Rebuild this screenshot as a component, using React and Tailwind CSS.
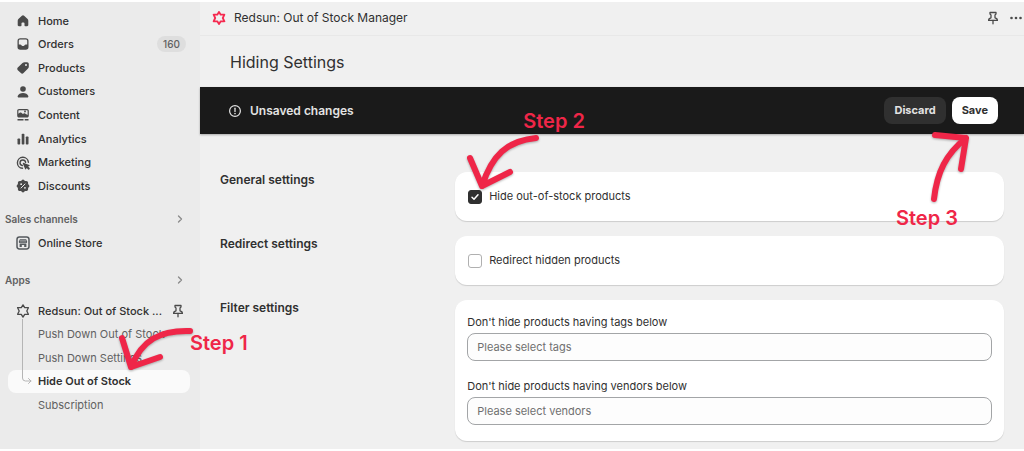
import { useState } from "react"

const Icon = ({ children, className = "text-[#4a4a4a]" }) => (
  <svg viewBox="0 0 14 14" className={`h-3.5 w-3.5 shrink-0 ${className}`} fill="currentColor" aria-hidden="true">
    {children}
  </svg>
)

const HomeIcon = () => (
  <Icon>
    <path d="M7 1.2c.4 0 .8.2 1.1.5l3.5 3.4c.4.4.7 1 .7 1.6v4.4c0 .7-.5 1.2-1.2 1.2H9.2c-.4 0-.7-.3-.7-.7V9.3c0-.5-.4-.9-.9-.9H6.4c-.5 0-.9.4-.9.9v2.3c0 .4-.3.7-.7.7H2.9c-.7 0-1.2-.5-1.2-1.2V6.7c0-.6.3-1.2.7-1.6l3.5-3.4c.3-.3.7-.5 1.1-.5z" />
  </Icon>
)

const OrdersIcon = () => (
  <Icon>
    <path
      fillRule="evenodd"
      d="M4.2 1.2h5.6a2.7 2.7 0 0 1 2.7 2.7v6.2a2.7 2.7 0 0 1-2.7 2.7H4.2a2.7 2.7 0 0 1-2.7-2.7V3.900a2.700 2.700 0 0 1 2.700-2.700zM4.200 2.500c-.8 0-1.400.6-1.400 1.400v3.500h1.500c.4 0 .8.200 1 .6l.3.500c.2.300.5.500.8.500h1.200c.3 0 .6-.2.8-.5l.3-.5c.2-.4.6-.6 1-.6h1.500V3.900c0-.8-.6-1.400-1.400-1.400z"
    />
  </Icon>
)

const ProductsIcon = () => (
  <Icon>
    <path
      fillRule="evenodd"
      d="M8.600 1.300h2.500c1 0 1.700.8 1.700 1.700v2.700c0 .7-.3 1.400-.8 1.900l-4.500 4.500c-.7.7-1.900.7-2.600 0L1.800 9.200c-.7-.7-.7-1.900 0-2.600l4.700-4.500c.6-.5 1.300-.8 2.100-.8zM10 5.100a1 1 0 1 0 0-2 1 1 0 0 0 0 2z"
    />
  </Icon>
)

const CustomersIcon = () => (
  <Icon>
    <circle cx="7" cy="4" r="2.800" />
    <path d="M7 8c2.600 0 4.500 1.200 5.300 3 .3.800-.2 1.500-1 1.500H2.700c-.8 0-1.300-.7-1-1.500C2.500 9.200 4.400 8 7 8z" />
  </Icon>
)

const ContentIcon = () => (
  <Icon>
    <path
      fillRule="evenodd"
      d="M3 1h8c1 0 1.800.8 1.800 1.800v5c0 1-.8 1.800-1.800 1.800H3c-1 0-1.800-.8-1.800-1.800v-5C1.200 1.800 2 1 3 1zm0 1.200c-.4 0-.6.3-.6.600v2.900l1.300-1c.5-.4 1.200-.4 1.700 0l1.500 1.300.8-.5c.4-.3 1-.3 1.400 0l2.500 1.600V2.800c0-.3-.2-.6-.6-.6zm6 2.200a.9.900 0 1 0 0-1.800.9.900 0 0 0 0 1.800z"
    />
    <path d="M1.500 11h6v1.400h-6zM8.700 11h3.800v1.400H8.700z" />
  </Icon>
)

const AnalyticsIcon = () => (
  <Icon>
    <rect x="1.500" y="6.500" width="2.700" height="6" rx=".8" />
    <rect x="5.700" y="1.800" width="2.700" height="10.700" rx=".8" />
    <rect x="9.800" y="4.500" width="2.700" height="8" rx=".8" />
  </Icon>
)

const MarketingIcon = () => (
  <Icon>
    <g fill="none" stroke="currentColor" strokeWidth="1.400" strokeLinecap="round">
      <path d="M12.400 6.300A5.500 5.500 0 1 0 6.500 12.300" />
      <path d="M9.600 6.400A2.800 2.800 0 1 0 6.300 9.500" />
    </g>
    <path d="M7.300 6.800l6 2.200c.5.200.5.800 0 1l-1.200.5 1.500 1.500c.3.300.3.700 0 1l-.4.400c-.3.300-.7.300-1 0l-1.500-1.500-.6 1.200c-.2.500-.8.400-1-.1L6.800 7.400c-.1-.4.100-.7.500-.6z" />
  </Icon>
)

const DiscountsIcon = () => (
  <Icon>
    <path d="M5.700 1.300a1.800 1.800 0 0 1 2.600 0l.6.600h1.400c1 0 1.800.8 1.800 1.800v1.400l.6.600a1.800 1.800 0 0 1 0 2.600l-.6.600v1.400c0 1-.8 1.800-1.800 1.800H8.900l-.6.600a1.800 1.800 0 0 1-2.600 0l-.6-.6H3.700c-1 0-1.800-.8-1.800-1.800V8.900l-.6-.6a1.800 1.800 0 0 1 0-2.600l.6-.6V3.700c0-1 .8-1.800 1.800-1.800h1.400z" />
    <g fill="none" stroke="#ebebeb" strokeLinecap="round">
      <path d="M9 5 5 9" strokeWidth="1" />
      <path d="M5.100 5.200h.1M8.900 8.800h.1" strokeWidth="1.700" />
    </g>
  </Icon>
)

const StoreIcon = () => (
  <Icon className="text-[#555a5e]">
    <rect x="1" y="1" width="12" height="12" rx="2.400" fill="none" stroke="currentColor" strokeWidth="1.500" />
    <path d="M3.800 3.200h6.400l1 2.500c0 .8-.5 1.300-1.100 1.300S9 6.600 9 6.200C9 6.700 8.500 7 8 7s-1-.3-1-.8c0 .5-.5.800-1 .8s-1-.3-1-.8c0 .4-.5.800-1.100.8S2.800 6.500 2.800 5.700z" />
    <path d="M3.600 7.500h6.800V11H8.200V9H5.800v2H3.600z" />
    <path d="M4 4.900h6" stroke="#ebebeb" strokeWidth=".6" />
  </Icon>
)

const StarIcon = ({ className, strokeWidth }) => (
  <Icon className={className}>
    <path
      d="M7 .9 8.700 3.700h3.700L10.800 7l1.600 3.300H8.700L7 13.100l-1.700-2.800H1.600L3.200 7 1.600 3.700h3.700z"
      fill="none"
      stroke="currentColor"
      strokeWidth={strokeWidth}
      strokeLinejoin="round"
    />
  </Icon>
)

const PinIcon = () => (
  <Icon>
    <g fill="none" stroke="currentColor" strokeWidth="1.300" strokeLinejoin="round" strokeLinecap="round">
      <path d="M4 1.500h6v1.600L9 3.900v2.900c1.500.3 2.400 1.200 2.400 2.600H2.600c0-1.400.9-2.300 2.400-2.600V3.900L4 3.100z" />
      <path d="M7 9.500v3.300" />
    </g>
  </Icon>
)

const ChevronIcon = () => (
  <svg viewBox="0 0 8 8" className="h-2 w-2" fill="none" stroke="#8a8a8a" strokeWidth="1.300" aria-hidden="true">
    <path d="m2.500 1 3 3-3 3" strokeLinecap="round" strokeLinejoin="round" />
  </svg>
)

const mainLinks = [
  { name: "Home", icon: HomeIcon },
  { name: "Orders", icon: OrdersIcon, count: 160 },
  { name: "Products", icon: ProductsIcon },
  { name: "Customers", icon: CustomersIcon },
  { name: "Content", icon: ContentIcon },
  { name: "Analytics", icon: AnalyticsIcon },
  { name: "Marketing", icon: MarketingIcon },
  { name: "Discounts", icon: DiscountsIcon },
]

const appLinks = ["Push Down Out of Stock", "Push Down Settings", "Hide Out of Stock", "Subscription"]

// Red hand drawn arrow with its step label
const Step = ({ label, path, className, labelClassName }) => (
  <div className={`pointer-events-none absolute z-20 h-24 w-32 ${className}`}>
    <svg
      viewBox="0 0 128 96"
      className="h-24 w-32 overflow-visible drop-shadow-[0_1px_1px_rgba(0,0,0,0.3)]"
      fill="none"
      stroke="#ef2648"
      strokeWidth="6"
      strokeLinecap="round"
      strokeLinejoin="round"
      aria-hidden="true"
    >
      <path d={path} />
    </svg>
    <span className={`absolute text-xl leading-6 font-semibold whitespace-nowrap text-[#ef2648] ${labelClassName}`}>
      {label}
    </span>
  </div>
)

const SectionTitle = ({ children }) => (
  <button className="flex h-6 w-full items-center justify-between pr-4 pl-[5px] text-[10px] font-semibold text-[#616161]">
    {children}
    <ChevronIcon />
  </button>
)

const Sidebar = () => (
  <nav className="relative w-50 shrink-0 bg-[#ebebeb] pt-[7px] text-[11px] font-medium text-[#303030]">
    <ul className="grid h-[189px] auto-rows-fr">
      {mainLinks.map(({ name, icon: LinkIcon, count }) => (
        <li key={name}>
          <a href="#" className="flex h-full items-center gap-2 pr-3.5 pl-4">
            <LinkIcon />
            <span className="flex-1">{name}</span>
            {count && (
              <span className="rounded-lg bg-[#dedede] px-1.5 text-[10px] leading-4 text-[#616161]">{count}</span>
            )}
          </a>
        </li>
      ))}
    </ul>

    <div className="mt-[9px]">
      <SectionTitle>Sales channels</SectionTitle>
      <a href="#" className="flex h-6 items-center gap-2 pl-4">
        <StoreIcon />
        Online Store
      </a>
    </div>

    <div className="mt-[13px]">
      <SectionTitle>Apps</SectionTitle>
      <div className="relative mt-[7px] grid h-[118px] auto-rows-fr">
        <a href="#" className="flex items-center gap-2 pr-[15px] pl-4">
          <StarIcon strokeWidth="1.300" />
          <span className="flex-1 whitespace-nowrap">Redsun: Out of Stock ...</span>
          <PinIcon />
        </a>
        {appLinks.map((name) =>
          name === "Hide Out of Stock" ? (
            <a
              key={name}
              href="#"
              className="mr-2.5 ml-2 flex items-center rounded-lg bg-[#fafafa] pl-[30px] font-semibold"
            >
              {name}
            </a>
          ) : (
            <a key={name} href="#" className="flex items-center pl-[38px] font-normal text-[#616161]">
              {name}
            </a>
          ),
        )}
        <svg
          viewBox="0 0 12 70"
          className="absolute top-5 left-5 h-[70px] w-3"
          fill="none"
          stroke="#b5b5b5"
          strokeLinecap="round"
          strokeLinejoin="round"
          aria-hidden="true"
        >
          <path d="M2.500 0v59q0 3 3 3H11M8.500 59.500 11 62l-2.500 2.500" />
        </svg>
        <Step
          label="Step 1"
          className="top-8 left-[120px]"
          path="M70 0C40-1 22 9 11 36M2 7l9 29 29-10"
          labelClassName="top-0 left-[70px]"
        />
      </div>
    </div>
  </nav>
)

const Section = ({ title, children }) => (
  <section className="grid grid-cols-[3fr_7fr]">
    <h2 className="text-xs leading-4 font-semibold text-[#303030]">{title}</h2>
    <div className="relative rounded-xl bg-white px-3 py-4 shadow-[0_1px_1px_rgba(0,0,0,0.15)]">{children}</div>
  </section>
)

const Checkbox = ({ label, defaultChecked = false }) => {
  const [checked, setChecked] = useState(defaultChecked)

  return (
    <label className="flex h-[17px] w-fit items-center gap-[7px] pl-px text-[11px]">
      <span className="relative flex">
        <input
          type="checkbox"
          checked={checked}
          onChange={(e) => setChecked(e.target.checked)}
          className="h-3.5 w-3.5 appearance-none rounded-[3px] border border-[#b0b0b0] bg-white checked:border-[#303030] checked:bg-[#303030]"
        />
        {checked && (
          <svg
            viewBox="0 0 14 14"
            className="pointer-events-none absolute inset-0 h-3.5 w-3.5"
            fill="none"
            stroke="white"
            strokeWidth="1.500"
            strokeLinecap="round"
            strokeLinejoin="round"
            aria-hidden="true"
          >
            <path d="m4 7.300 2 2 4-4.500" />
          </svg>
        )}
      </span>
      {label}
    </label>
  )
}

const TextField = ({ id, label, placeholder }) => (
  <div>
    <label htmlFor={id} className="block text-[11px] leading-3">
      {label}
    </label>
    <input
      id={id}
      type="text"
      placeholder={placeholder}
      className="mt-[5px] block h-7 w-full rounded-lg border border-[#a3a5a7] bg-[#fdfdfd] px-[9px] text-[11px] placeholder:text-[#707070]"
    />
  </div>
)

const App = () => {
  return (
    <div className="flex min-h-screen overflow-hidden border-y-2 border-white bg-[#f0f0f0] font-['Inter','Liberation_Sans',sans-serif] text-[#303030]">
      <Sidebar />

      <main className="min-w-0 flex-1">
        <header className="flex h-[34px] items-center gap-2 border-b border-[#e8e8e8] pr-px pb-0.5 pl-3 text-xs">
          <StarIcon className="text-[#f5294f]" strokeWidth="1.800" />
          <span className="flex-1">Redsun: Out of Stock Manager</span>
          <button aria-label="Pin app">
            <PinIcon />
          </button>
          <button aria-label="More actions" className="ml-px">
            <Icon>
              <circle cx="2.500" cy="7" r="1.300" />
              <circle cx="7" cy="7" r="1.300" />
              <circle cx="11.500" cy="7" r="1.300" />
            </Icon>
          </button>
        </header>

        <h1 className="flex h-[51px] items-center pl-[30px] text-base">Hiding Settings</h1>

        <div className="relative flex h-[47px] items-center bg-[#1a1a1a] pr-[26px] pl-7 text-[11px] font-bold text-[#e3e3e3] shadow-[0_1px_2px_rgba(0,0,0,0.3)]">
          <Icon className="text-[#e3e3e3]">
            <circle cx="7" cy="7" r="5.400" fill="none" stroke="currentColor" strokeWidth="1.200" />
            <path d="M7 4.200v3.200" stroke="currentColor" strokeWidth="1.300" strokeLinecap="round" />
            <circle cx="7" cy="9.600" r=".8" />
          </Icon>
          <span className="ml-2 flex-1 text-xs font-semibold">Unsaved changes</span>
          <button className="h-[27px] rounded-lg bg-[#303030] px-2.5">Discard</button>
          <button className="ml-1.5 h-[27px] rounded-lg bg-white px-2.5 text-[#303030]">Save</button>
          <Step
            label="Step 3"
            className="top-10 -right-1"
            path="M34 72C37 45 46 27 66 11M35 8l31 3-5 31"
            labelClassName="top-[79px] -left-1"
          />
        </div>

        <div className="space-y-[15px] px-5 pt-[38px] pb-2">
          <Section title="General settings">
            <Checkbox label="Hide out-of-stock products" defaultChecked />
            <Step
              label="Step 2"
              className="-top-12 left-2"
              path="M73 14C44 17 29 31 19 62M7 34l12 28 28-14"
              labelClassName="-top-[15px] left-[60px]"
            />
          </Section>
          <Section title="Redirect settings">
            <Checkbox label="Redirect hidden products" />
          </Section>
          <Section title="Filter settings">
            <div className="space-y-[19px]">
              <TextField id="tags" label="Don't hide products having tags below" placeholder="Please select tags" />
              <TextField
                id="vendors"
                label="Don't hide products having vendors below"
                placeholder="Please select vendors"
              />
            </div>
          </Section>
        </div>
      </main>
    </div>
  )
}

export default App
